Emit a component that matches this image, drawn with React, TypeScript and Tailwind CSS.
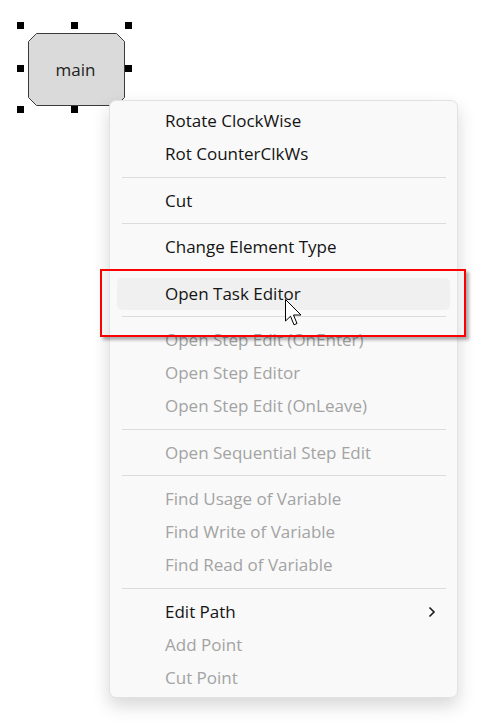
import React from "react";

type Item = { label: string; disabled?: boolean; sub?: boolean; active?: boolean } | "sep";

const items: Item[] = [
  { label: "Rotate ClockWise" },
  { label: "Rot CounterClkWs" },
  "sep",
  { label: "Cut" },
  "sep",
  { label: "Change Element Type" },
  "sep",
  { label: "Open Task Editor", active: true },
  "sep",
  { label: "Open Step Edit (OnEnter)", disabled: true },
  { label: "Open Step Editor", disabled: true },
  { label: "Open Step Edit (OnLeave)", disabled: true },
  "sep",
  { label: "Open Sequential Step Edit", disabled: true },
  "sep",
  { label: "Find Usage of Variable", disabled: true },
  { label: "Find Write of Variable", disabled: true },
  { label: "Find Read of Variable", disabled: true },
  "sep",
  { label: "Edit Path", sub: true },
  { label: "Add Point", disabled: true },
  { label: "Cut Point", disabled: true },
];

const font = { fontFamily: '"Open Sans", "Noto Sans", sans-serif' };

const handles = [
  [17, 22],
  [71, 22],
  [125, 22],
  [17, 65],
  [125, 65],
  [17, 106],
  [71, 106],
];

export default function App() {
  return (
    <div className="relative w-[479px] h-[726px] bg-white overflow-hidden" style={font}>
      {/* diagram node */}
      <svg className="absolute left-[27px] top-[33px]" width="99" height="74" viewBox="0 0 99 74">
        <polygon
          points="9.5,0.5 89.5,0.5 97.5,8.5 97.5,64.5 89.5,72.5 9.5,72.5 1.5,64.5 1.5,8.5"
          fill="#dadada"
          stroke="#3a3a3a"
          strokeWidth="1"
        />
        <text
          x="48.5"
          y="42.5"
          textAnchor="middle"
          fontSize="17"
          fill="#222222"
          style={{ fontFamily: '"Open Sans", sans-serif' }}
        >
          main
        </text>
      </svg>
      {handles.map(([x, y], i) => (
        <div key={i} className="absolute w-[7px] h-[7px] bg-black" style={{ left: x, top: y }} />
      ))}

      {/* context menu */}
      <div className="absolute left-[109px] top-[100px] w-[349px] rounded-[7px] border border-[#e2e2e2] bg-[#f9f9f9] pt-[3.5px] pb-[3px] shadow-[0_8px_18px_rgba(0,0,0,0.16)] flex flex-col">
        {items.map((it, i) =>
          it === "sep" ? (
            <div key={i} className="h-[13.5px] flex items-center pl-[12px] pr-[11px]">
              <div className="h-px w-full bg-[#dcdcdc]" />
            </div>
          ) : (
            <div key={i} className="h-[33px] px-[7px] py-[0.5px] flex">
              <div
                className={
                  "flex-1 flex items-center rounded-[5px] pl-[48px] pr-[14px] text-[17px] " +
                  (it.active ? "bg-[#f0f0f0] " : "") +
                  (it.disabled ? "text-[#a3a3a3]" : "text-[#141414]")
                }
              >
                <span className="flex-1">{it.label}</span>
                {it.sub && (
                  <svg width="8" height="12" viewBox="0 0 8 12">
                    <path d="M1.5 1.5 L6 6 L1.5 10.5" fill="none" stroke="#1b1b1b" strokeWidth="1.6" />
                  </svg>
                )}
              </div>
            </div>
          )
        )}
      </div>

      {/* red highlight box */}
      <div className="absolute left-[100px] top-[269px] w-[366px] h-[68px] border-2 border-[#ff0000] shadow-[3px_3px_3px_rgba(0,0,0,0.3)]" />

      {/* mouse cursor */}
      <svg className="absolute left-[284px] top-[299px]" width="20" height="28" viewBox="0 0 20 28">
        <polygon
          points="1.5,0.5 1.5,22 6.5,17.2 10,25.8 13,24.5 9.5,16 17,16"
          fill="#ffffff"
          stroke="#000000"
          strokeWidth="1"
          strokeLinejoin="miter"
        />
      </svg>
    </div>
  );
}
